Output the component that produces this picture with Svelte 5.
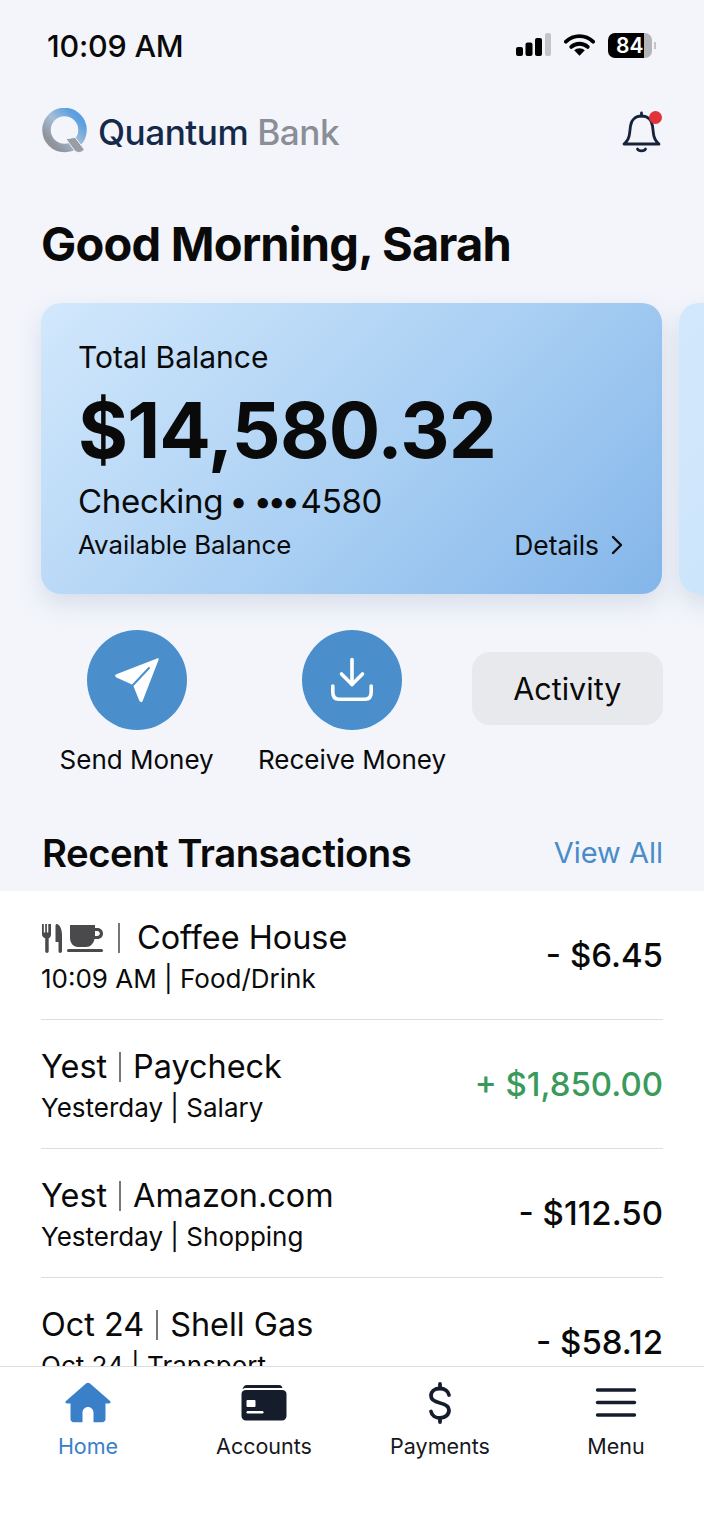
<script>
  const transactions = [
    { when: "", name: "Coffee House", sub: "10:09 AM | Food/Drink", amount: "- $6.45" },
    { when: "Yest", name: "Paycheck", sub: "Yesterday | Salary", amount: "+ $1,850.00", credit: true },
    { when: "Yest", name: "Amazon.com", sub: "Yesterday | Shopping", amount: "- $112.50" },
    { when: "Oct 24", name: "Shell Gas", sub: "Oct 24 | Transport", amount: "- $58.12" }
  ]
</script>

<div class="page">
  <div class="status">
    <span class="time">10:09 AM</span>
    <div class="status-icons">
      <svg width="35" height="24" viewBox="0 0 35 24">
        <rect x="0" y="14" width="7" height="9" rx="2" fill="#000" />
        <rect x="9.500" y="9.500" width="7" height="13.500" rx="2" fill="#000" />
        <rect x="19" y="5" width="7" height="18" rx="2" fill="#000" />
        <rect x="29" y="0" width="6" height="23" rx="2" fill="#c4c5c9" />
      </svg>
      <svg width="31" height="24" viewBox="0 0 32 24">
        <path d="M2 8.500a20 20 0 0 1 28 0" fill="none" stroke="#000" stroke-width="4" stroke-linecap="round" />
        <path d="M7.500 14a12.500 12.500 0 0 1 17 0" fill="none" stroke="#000" stroke-width="4" stroke-linecap="round" />
        <path d="M16 23l-5.500-5.500a8 8 0 0 1 11 0z" fill="#000" />
      </svg>
      <div class="battery">
        <div class="battery-body"><span>84</span></div>
        <div class="battery-cap"></div>
      </div>
    </div>
  </div>

  <header class="brand-row">
    <div class="brand">
      <svg class="logo" width="48" height="48" viewBox="0 0 48 48">
        <defs>
          <linearGradient id="ring" x1="0.900" y1="0.200" x2="0.200" y2="0.900">
            <stop offset="0" stop-color="#5a9fe0" />
            <stop offset="0.500" stop-color="#a6bfd8" />
            <stop offset="1" stop-color="#8f939b" />
          </linearGradient>
        </defs>
        <circle cx="23.500" cy="22" r="18" fill="none" stroke="url(#ring)" stroke-width="8.500" />
        <path d="M25 31l8.500 11.500c1.500 1.800 4 2.300 6 1.800 2-.8 3.200-1.800 3.700-3l-9.200-12z" fill="#9a9da4" stroke="#f3f5fb" stroke-width="1" />
      </svg>
      <span class="brand-name">Quantum <em>Bank</em></span>
    </div>
    <div class="bell">
      <svg width="44" height="44" viewBox="0 0 44 44" fill="none" stroke="#16233a" stroke-width="2.800" stroke-linecap="round" stroke-linejoin="round">
        <path d="M5 34c3-2.500 5-5 5.500-10l1-8C12.200 10 16.500 6 22.500 6s10.300 4 11 10l1 8c.5 5 2.500 7.500 5.500 10z" />
        <path d="M22.500 6V3" />
        <path d="M18.500 39c1 2.500 7 2.500 8 0" />
      </svg>
      <span class="dot"></span>
    </div>
  </header>

  <h1>Good Morning, Sarah</h1>

  <div class="cards">
    <section class="card">
      <div class="card-label">Total Balance</div>
      <div class="card-amount">$14,580.32</div>
      <div class="card-account">Checking<span class="dot-one">•</span><span class="dots">•••</span>4580</div>
      <div class="card-foot">
        <span class="avail">Available Balance</span>
        <span class="details">
          Details
          <svg width="14" height="20" viewBox="0 0 14 20" fill="none" stroke="#0a0a0a" stroke-width="2.400" stroke-linecap="round" stroke-linejoin="round"><path d="M3 2l8 8-8 8" /></svg>
        </span>
      </div>
    </section>
    <section class="card next"></section>
  </div>

  <div class="actions">
    <div class="action">
      <div class="circle">
        <svg width="46" height="46" viewBox="0 0 46 46">
          <path d="M43 1.500L3 17c-2.500 1-2.500 2-.5 3.500L19 28l6 15c1.500 3 3 3 4 0L44.500 3c.5-1.500-.2-2-1.500-1.500z" fill="#fff" />
          <path d="M35 11L19 28" fill="none" stroke="#4a8fcb" stroke-width="2" stroke-linecap="round" />
        </svg>
      </div>
      <span>Send Money</span>
    </div>
    <div class="action">
      <div class="circle">
        <svg width="50" height="50" viewBox="0 0 50 50" fill="none" stroke="#fff" stroke-width="3.600" stroke-linecap="round" stroke-linejoin="round">
          <path d="M25 4.500v25" />
          <path d="M14.500 19L25 29.500 35.500 19" />
          <path d="M5.800 31v6c0 5 2 7.200 6 7.200h26.400c4 0 6-2.200 6-7.200v-6" />
        </svg>
      </div>
      <span>Receive Money</span>
    </div>
    <button class="activity" type="button">Activity</button>
  </div>

  <div class="section-head">
    <h2>Recent Transactions</h2>
    <span class="view-all">View All</span>
  </div>

  <div class="list">
    {#each transactions as t}
      <div class="row">
        <div class="row-text">
          <div class="row-title">
            {#if t.when}
              <span>{t.when}</span>
            {:else}
              <svg class="food" width="63" height="30" viewBox="0 0 63 30" fill="#4a4a4c">
                <path d="M1 1h1.800v8.500h1.400V1h1.700v8.500h1.400V1H10v10.500c0 2-.8 3-2.300 3.800V28c0 1-.8 2-1.700 2s-1.800-1-1.800-2V15.300C2.500 14.500 1 13.500 1 11.500z" />
                <path d="M16 1c3 1 5 5 5 11v16c0 1-.8 2-1.800 2s-1.700-1-1.700-2v-9h-3V3c0-1.500.5-2 1.500-2z" />
                <path d="M29 2h25v3h2.500c3.300 0 5.500 2.500 5.500 5.500S59.800 16 56.500 16H53.500c-1 4.500-4 8-8.500 8h-8c-4.500 0-8-4-8-9zm25 6v5h2.200c1.500 0 2.600-1 2.600-2.500S57.700 8 56.200 8z" />
                <rect x="26" y="26" width="36" height="3" rx="1.500" />
              </svg>
            {/if}
            <i class="bar" class:gap={!t.when}></i>
            <span>{t.name}</span>
          </div>
          <div class="row-sub">{t.sub}</div>
        </div>
        <div class="row-amount" class:credit={t.credit}>{t.amount}</div>
      </div>
    {/each}
  </div>

  <nav class="tabs">
    <div class="tab active">
      <svg width="46" height="44" viewBox="0 0 46 44">
        <path d="M21 1.500c1.200-1 2.800-1 4 0L45 19c1.200 1.300.6 2.500-1 2.500h-3.500V37c0 2-1.300 3.200-3.200 3.200H28.500V30.500c0-3-2.500-5.500-5.500-5.500s-5.500 2.500-5.500 5.500v9.700H8.700c-1.900 0-3.200-1.200-3.200-3.200V21.500H2c-1.600 0-2.200-1.200-1-2.500z" fill="#3a80c9" />
      </svg>
      <span>Home</span>
    </div>
    <div class="tab">
      <svg width="46" height="44" viewBox="0 0 46 44">
        <path d="M6 3h32c2 0 3 1 3.500 3H5c-1.500 0-2.800.5-3.500 1.500C2 5 3.500 3 6 3z" fill="#151d2c" />
        <path d="M5 8h36c2.500 0 4.500 1.500 4.500 4v22c0 2.500-2 4.500-4.500 4.500H5C2.500 38.500.5 36.500.5 34V12C.5 9.500 2.500 8 5 8z" fill="#151d2c" />
        <rect x="5.500" y="18" width="9" height="7" rx="1" fill="#fff" />
        <rect x="5.500" y="29" width="17" height="2.400" rx="1.200" fill="#fff" />
      </svg>
      <span>Accounts</span>
    </div>
    <div class="tab">
      <svg width="46" height="44" viewBox="0 0 46 44" fill="none" stroke="#151d2c" stroke-width="3.800" stroke-linecap="round">
        <path d="M23 2v4" />
        <path d="M23 36v4" />
        <path d="M32 13c-.8-4-4.500-6.500-9-6.500-5.300 0-9 3-9 7.300 0 4.300 3.800 6 9 7.200 5.200 1.200 9 3 9 7.300s-3.700 7.700-9 7.700c-4.500 0-8.200-2.500-9-6.500" />
      </svg>
      <span>Payments</span>
    </div>
    <div class="tab">
      <svg width="46" height="44" viewBox="0 0 46 44" fill="none" stroke="#151d2c" stroke-width="3.400" stroke-linecap="round">
        <path d="M4.500 8h37" />
        <path d="M4.500 20.500h37" />
        <path d="M4.500 33h37" />
      </svg>
      <span>Menu</span>
    </div>
  </nav>
</div>

<style>
  :global(body) {
    margin: 0;
    background: #f3f5fb;
  }

  .page {
    width: 704px;
    height: 1520px;
    overflow: hidden;
    display: flex;
    flex-direction: column;
    background: #f3f5fb;
    color: #0a0a0a;
    font-family: Inter, "Liberation Sans", sans-serif;
  }

  .status {
    height: 90px;
    padding: 0 48px 0 47px;
    display: flex;
    align-items: center;
    justify-content: space-between;
    box-sizing: border-box;
  }
  .time {
    font-size: 30.500px;
    font-weight: 500;
    letter-spacing: -0.2px;
  }
  .status-icons {
    display: flex;
    align-items: center;
    gap: 13px;
  }
  .battery {
    display: flex;
    align-items: center;
    gap: 2px;
  }
  .battery-body {
    width: 44px;
    height: 25px;
    border-radius: 7px;
    background: linear-gradient(90deg, #000 82%, #b4b5b9 82%);
    display: flex;
    align-items: center;
    padding-left: 8px;
    box-sizing: border-box;
    color: #fff;
    font-size: 21px;
    font-weight: 600;
  }
  .battery-cap {
    width: 2px;
    height: 7px;
    background: #c4c5c9;
  }

  .brand-row {
    height: 84px;
    padding: 0 41px;
    display: flex;
    align-items: center;
    justify-content: space-between;
  }
  .brand {
    display: flex;
    align-items: center;
    gap: 9px;
  }
  .brand-name {
    font-size: 35.200px;
    font-weight: 500;
    color: #15294a;
    letter-spacing: -0.5px;
  }
  .brand-name em {
    font-style: normal;
    color: #8b8e97;
  }
  .bell {
    position: relative;
    width: 44px;
    height: 44px;
  }
  .dot {
    position: absolute;
    top: 1px;
    right: 1px;
    width: 13px;
    height: 13px;
    border-radius: 50%;
    background: #e2333a;
  }

  h1 {
    margin: 42px 41px 31px;
    font-size: 47px;
    line-height: 56px;
    font-weight: 700;
    letter-spacing: -0.8px;
  }

  .cards {
    display: flex;
    gap: 17px;
    padding-left: 41px;
  }
  .card {
    flex: 0 0 621px;
    height: 291px;
    box-sizing: border-box;
    padding: 35px 38px 0 37px;
    border-radius: 20px;
    background: linear-gradient(135deg, #d2e8fc 0%, #a9cff3 55%, #84b6ea 100%);
    box-shadow: 0 10px 24px rgba(70, 100, 140, 0.16);
  }
  .card.next {
    background: linear-gradient(135deg, #d2e8fc, #c4e0fa);
  }
  .card-label {
    font-size: 30px;
    line-height: 38px;
  }
  .card-amount {
    font-size: 76.400px;
    line-height: 88px;
    font-weight: 700;
    letter-spacing: -0.8px;
    margin-top: 10px;
  }
  .card-account {
    font-size: 33px;
    line-height: 40px;
    margin-top: 7px;
    letter-spacing: -0.3px;
  }
  .dot-one {
    margin: 0 6px;
  }
  .dots {
    letter-spacing: -4.500px;
    margin-right: 5px;
  }
  .card-foot {
    display: flex;
    justify-content: space-between;
    align-items: center;
    font-size: 26.400px;
    line-height: 34px;
    margin-top: 7px;
  }
  .avail {
    font-size: 25.800px;
  }
  .details {
    display: flex;
    align-items: center;
    gap: 11px;
  }

  .actions {
    margin-top: 36px;
    padding: 0 41px;
    display: grid;
    grid-template-columns: repeat(3, minmax(0, 1fr));
    column-gap: 24px;
    align-items: start;
  }
  .action {
    display: flex;
    flex-direction: column;
    align-items: center;
    gap: 13px;
    font-size: 26px;
    line-height: 34px;
    white-space: nowrap;
  }
  .circle {
    width: 100px;
    height: 100px;
    border-radius: 50%;
    background: #4a8fcb;
    display: flex;
    align-items: center;
    justify-content: center;
  }
  .activity {
    margin-top: 22px;
    height: 73px;
    border: 0;
    border-radius: 18px;
    background: #e8e9ed;
    color: #0a0a0a;
    font: inherit;
    font-size: 30.500px;
  }

  .section-head {
    margin-top: 53px;
    height: 61px;
    padding: 0 41px 0 42px;
    box-sizing: border-box;
    display: flex;
    justify-content: space-between;
    align-items: flex-start;
  }
  h2 {
    margin: 0;
    font-size: 38.300px;
    line-height: 46px;
    font-weight: 600;
    letter-spacing: -0.5px;
  }
  .view-all {
    font-size: 29px;
    line-height: 46px;
    color: #4a8cc8;
  }

  .list {
    flex: 1;
    min-height: 0;
    overflow: hidden;
    background: #fff;
  }
  .row {
    height: 129px;
    margin: 0 41px;
    box-sizing: border-box;
    border-bottom: 1.500px solid #dcdde0;
    display: flex;
    align-items: center;
    justify-content: space-between;
  }
  .row-text {
    padding-top: 3px;
  }
  .row-title {
    display: flex;
    align-items: center;
    font-size: 32.400px;
    line-height: 42px;
  }
  .food {
    margin-top: -1px;
    flex: none;
  }
  .bar {
    width: 2px;
    height: 30px;
    margin: 0 12px;
    background: #777;
  }
  .bar.gap {
    margin: 0 17px 0 14px;
  }
  .row-sub {
    font-size: 26px;
    line-height: 34px;
    margin-top: 3px;
  }
  .row-amount {
    font-size: 33px;
    font-weight: 500;
  }
  .row-amount.credit {
    color: #3a9a5c;
  }

  .tabs {
    height: 154px;
    box-sizing: border-box;
    border-top: 1.500px solid #dcdde0;
    background: #fff;
    display: grid;
    grid-template-columns: repeat(4, 1fr);
    padding-top: 15px;
    align-items: start;
  }
  .tab {
    display: flex;
    flex-direction: column;
    align-items: center;
    gap: 6px;
    font-size: 21.500px;
    line-height: 28px;
    font-weight: 400;
    color: #16181d;
  }
  .tab.active {
    color: #3a80c9;
  }
</style>
